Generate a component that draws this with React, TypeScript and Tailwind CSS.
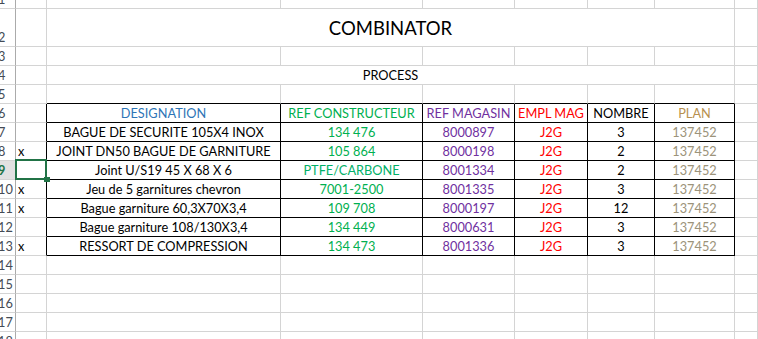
import React from "react";

type Cell = {
  text?: string;
  color?: string;
  span?: boolean;
  left?: boolean;
  big?: boolean;
  blackR?: boolean;
  blackB?: boolean;
};

const headColors = ["#2e75b6", "#00b050", "#7030a0", "#ff0000", "#000000", "#b8914f"];
const dataColors = ["#000000", "#00b050", "#7030a0", "#ff0000", "#000000", "#9c937a"];

const headers = ["DESIGNATION", "REF CONSTRUCTEUR", "REF MAGASIN", "EMPL MAG", "NOMBRE", "PLAN"];

const items: [string, string[]][] = [
  ["", ["BAGUE DE SECURITE 105X4 INOX", "134 476", "8000897", "J2G", "3", "137452"]],
  ["x", ["JOINT DN50 BAGUE DE GARNITURE", "105 864", "8000198", "J2G", "2", "137452"]],
  ["", ["Joint U/S19 45 X 68 X 6", "PTFE/CARBONE", "8001334", "J2G", "2", "137452"]],
  ["x", ["Jeu de 5 garnitures chevron", "7001-2500", "8001335", "J2G", "3", "137452"]],
  ["x", ["Bague garniture 60,3X70X3,4", "109 708", "8000197", "J2G", "12", "137452"]],
  ["", ["Bague garniture 108/130X3,4", "134 449", "8000631", "J2G", "3", "137452"]],
  ["x", ["RESSORT DE COMPRESSION", "134 473", "8001336", "J2G", "3", "137452"]],
];

function buildRow(n: number): Cell[] {
  const blank = (o: Partial<Cell> = {}): Cell => ({ text: "", ...o });
  if (n === 2) return [blank(), blank({ text: "COMBINATOR", span: true, big: true }), blank()];
  if (n === 4) return [blank(), blank({ text: "PROCESS", span: true }), blank()];
  if (n === 5) return [blank(), ...[0, 1, 2, 3, 4, 5].map(() => blank({ blackB: true })), blank()];
  if (n === 6)
    return [
      blank({ blackR: true }),
      ...headers.map((h, i) => ({ text: h, color: headColors[i], blackR: true, blackB: true })),
      blank(),
    ];
  if (n >= 7 && n <= 13) {
    const [mark, vals] = items[n - 7];
    return [
      { text: mark, left: true, blackR: true },
      ...vals.map((v, i) => ({
        text: v,
        color: i === 1 && v === "PTFE/CARBONE" ? "#00b068" : dataColors[i],
        blackR: true,
        blackB: true,
      })),
      blank(),
    ];
  }
  return [0, 1, 2, 3, 4, 5, 6, 7].map(() => blank());
}

export default function App() {
  const rows = Array.from({ length: 18 }, (_, i) => i + 1);

  return (
    <div className="relative w-full h-screen overflow-hidden bg-white font-['Lato',sans-serif] text-[12.75px] leading-[15px] text-black">
      <div className="-mt-[10px] grid grid-cols-[16px_31px_234px_142px_92px_73px_67px_80px_1fr] grid-rows-[19px_38px] auto-rows-[19px]">
        {rows.map((n) => {
          const selected = n === 9;
          return (
            <React.Fragment key={n}>
              {/* row number, left edge clipped by the window */}
              <div
                className={`flex items-end overflow-hidden whitespace-nowrap border-r border-b border-r-[#ababab] border-b-[#d4d4d4] pb-[1px] ${
                  selected ? "bg-[#e1e1e1] font-bold text-[#217346]" : "bg-white text-[#444b55]"
                }`}
              >
                <span className="-ml-[2px]">{n}</span>
              </div>
              {buildRow(n).map((c, i) => (
                <div
                  key={i}
                  className={`flex overflow-hidden whitespace-nowrap border-r border-b ${
                    c.blackR ? "border-r-black" : "border-r-[#d4d4d4]"
                  } ${c.blackB ? "border-b-black" : "border-b-[#d4d4d4]"} ${
                    c.span ? "col-span-6" : ""
                  } ${c.big ? "items-center justify-center text-[18.5px] leading-[22px]" : "items-end pb-[1px]"} ${
                    c.left ? "justify-start pl-[2px]" : "justify-center"
                  }`}
                  style={c.color ? { color: c.color } : undefined}
                >
                  {c.text}
                </div>
              ))}
            </React.Fragment>
          );
        })}
      </div>

      {/* active cell A9 */}
      <div className="absolute left-[15px] top-[159px] h-[21px] w-[32px] border-2 border-[#217346]" />
      <div className="absolute left-[44px] top-[177px] h-[5px] w-[6px] bg-[#217346]" />
    </div>
  );
}
